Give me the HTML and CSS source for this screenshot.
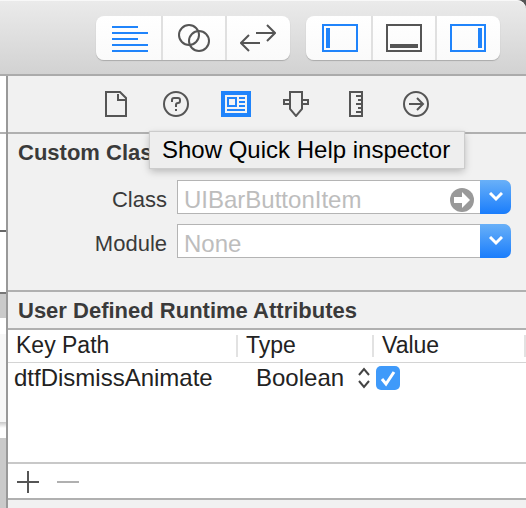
FILE: index.html
```html
<!DOCTYPE html>
<html lang="en">
<head>
<meta charset="utf-8">
<title>Identity Inspector</title>
<link rel="stylesheet" href="styles.css">
</head>
<body>
<header class="toolbar">
  <div class="segments" role="group" aria-label="Editor">
    <button class="segment active" type="button" aria-label="Standard editor"><svg width="36" height="28" fill="none" stroke="currentColor" stroke-width="2"><path d="M0 3H26M0 9H36M0 15H26M0 21H36M0 27H36"/></svg></button>
    <button class="segment" type="button" aria-label="Assistant editor"><svg width="36" height="28" fill="none" stroke="currentColor" stroke-width="2"><circle cx="13" cy="11" r="10"/><circle cx="23" cy="17" r="10"/></svg></button>
    <button class="segment" type="button" aria-label="Version editor"><svg width="36" height="28" fill="none" stroke="currentColor" stroke-width="2"><path d="M16 9H35M27 1l8 8-8 8M20 19H1M9 11l-8 8 8 8"/></svg></button>
  </div>
  <div class="segments" role="group" aria-label="View">
    <button class="segment active" type="button" aria-label="Navigator"><svg width="36" height="28" fill="none" stroke="currentColor" stroke-width="2"><rect x="1" y="1" width="34" height="26"/><path stroke-width="4" d="M6 4v20"/></svg></button>
    <button class="segment" type="button" aria-label="Debug area"><svg width="36" height="28" fill="none" stroke="currentColor" stroke-width="2"><rect x="1" y="1" width="34" height="26"/><path stroke-width="4" d="M4 22h28"/></svg></button>
    <button class="segment active" type="button" aria-label="Utilities"><svg width="36" height="28" fill="none" stroke="currentColor" stroke-width="2"><rect x="1" y="1" width="34" height="26"/><path stroke-width="4" d="M30 4v20"/></svg></button>
  </div>
</header>
<div class="workspace">
  <div class="canvas-edge" aria-hidden="true">
    <div class="edge-bar"></div>
    <div class="edge-view"></div>
    <div class="edge-cell"></div>
    <div class="edge-gap"></div>
    <div class="edge-space"></div>
    <div class="edge-scene"></div>
    <div class="edge-foot"></div>
    <div class="edge-rest"></div>
  </div>
  <main class="inspector">
    <nav class="tabs">
      <button class="tab" type="button" aria-label="File"><svg width="30" height="26" fill="none" stroke="currentColor" stroke-width="2"><path d="M5 1h14l6 6v18H5zM17 3v6h7"/></svg></button>
      <button class="tab" type="button" aria-label="Quick Help"><svg width="30" height="26" fill="none" stroke="currentColor" stroke-width="2"><circle cx="15" cy="13" r="12"/><path d="M11 11V9q0-2 2-2h4q2 0 2 2v1q0 2-2 2t-2 2v2M15 18v2"/></svg></button>
      <button class="tab active" type="button" aria-label="Identity"><svg width="30" height="26" fill="none" stroke="currentColor" stroke-width="2"><path fill="currentColor" stroke="none" d="M0 0h30v26H0z"/><path fill="#f4f4f4" stroke="none" d="M4 4h22v18H4z"/><path d="M7 7h8v8H7zM18 7h6M18 11h6M18 15h6M6 19h18"/></svg></button>
      <button class="tab" type="button" aria-label="Attributes"><svg width="30" height="26" fill="none" stroke="currentColor" stroke-width="2"><path d="M9 1h12v17l-6 7-6-7zM9 9H3v4h6M21 9h6v4h-6"/></svg></button>
      <button class="tab" type="button" aria-label="Size"><svg width="30" height="26" fill="none" stroke="currentColor" stroke-width="2"><path d="M9 1h12v24H9zM15 5h6M17 9h4M15 13h6M17 17h4M15 21h6"/></svg></button>
      <button class="tab" type="button" aria-label="Connections"><svg width="30" height="26" fill="none" stroke="currentColor" stroke-width="2"><circle cx="15" cy="13" r="12"/><path d="M8 13h14M16 7l6 6-6 6"/></svg></button>
      <div class="tooltip" role="tooltip">Show Quick Help inspector</div>
    </nav>
    <section class="custom-class">
      <h2>Custom Class</h2>
      <div class="field">
        <label for="class">Class</label>
        <div class="combo">
          <input id="class" type="text" placeholder="UIBarButtonItem">
          <button class="jump" type="button" aria-label="Go to class"><svg width="24" height="24"><circle cx="12" cy="12" r="12" fill="#999"/><path fill="#fff" d="M4 9h8V4l8 8-8 8v-5H4z"/></svg></button>
          <button class="drop" type="button" aria-label="Choose class"><svg width="14" height="10" fill="none" stroke="#fff" stroke-width="3"><path d="M1 1l6 6 6-6"/></svg></button>
        </div>
      </div>
      <div class="field">
        <label for="module">Module</label>
        <div class="combo">
          <input id="module" type="text" placeholder="None">
          <button class="drop" type="button" aria-label="Choose module"><svg width="14" height="10" fill="none" stroke="#fff" stroke-width="3"><path d="M1 1l6 6 6-6"/></svg></button>
        </div>
      </div>
    </section>
    <section class="attributes">
      <h2>User Defined Runtime Attributes</h2>
      <div class="listing">
        <table>
          <colgroup><col class="key-col"><col class="type-col"><col><col class="end-col"></colgroup>
          <thead><tr><th><span>Key Path</span></th><th><span>Type</span></th><th><span>Value</span></th><td><span></span></td></tr></thead>
          <tbody><tr>
            <td>dtfDismissAnimate</td>
            <td><div class="type"><select aria-label="Type"><option>Boolean</option></select><svg width="14" height="22" fill="none" stroke="#444" stroke-width="2"><path d="M2 8l5-6 5 6M2 14l5 6 5-6"/></svg></div></td>
            <td><label class="check"><input type="checkbox" checked aria-label="Value"><svg width="24" height="24" fill="none" stroke="#fff" stroke-width="3"><path d="M6 13l4 5 8-12"/></svg></label></td>
            <td></td>
          </tr></tbody>
        </table>
      </div>
      <div class="actions">
        <button type="button" aria-label="Add"><svg width="22" height="22" stroke="#555" stroke-width="2"><path d="M0 11h22M11 0v22"/></svg></button>
        <button type="button" aria-label="Remove" disabled><svg width="22" height="22" stroke="#b0b0b0" stroke-width="2"><path d="M0 11h22"/></svg></button>
      </div>
    </section>
  </main>
</div>
</body>
</html>
```
FILE: styles.css
```css
* { box-sizing: border-box; }

body {
  margin: 0;
  min-height: 100vh;
  display: flex;
  flex-direction: column;
  background: #555;
  color: #222;
  font: 22px/28px "Liberation Sans", Arial, sans-serif;
}

svg { display: block; }

button {
  padding: 0;
  border: 0;
  background: none;
  color: #555;
  font: inherit;
}

.toolbar {
  display: flex;
  justify-content: flex-end;
  gap: 16px;
  padding: 16px 26px 14px 8px;
  border-bottom: 2px solid #ababab;
  border-top-right-radius: 9px;
  background: linear-gradient(#ebebeb, #d2d2d2);
  box-shadow: inset 0 1px #f8f8f8;
}

.segments {
  display: flex;
  height: 44px;
  border-radius: 8px;
  background: linear-gradient(#fff, #fafafa);
  box-shadow: 0 1px 1px #aaa;
}

.segment {
  display: flex;
  align-items: center;
  justify-content: center;
  width: 65px;
}

.segment:first-child { padding-left: 3px; }
.segment:last-child { padding-right: 1px; }
.segment + .segment { border-left: 2px solid #e0e0e0; }
.segment:nth-child(2) { width: 64px; }
.active { color: #2084fb; }

.workspace {
  flex: 1;
  display: flex;
  background: #f1f1f1;
}

.canvas-edge {
  width: 8px;
  display: flex;
  flex-direction: column;
  border-right: 2px solid #999;
  background: #fff;
}

.edge-bar { height: 58px; border-bottom: 2px solid #b0b0b0; }
.edge-view { height: 98px; border-bottom: 2px solid #666; }
.edge-cell { height: 62px; border-bottom: 2px solid #777; }
.edge-gap { height: 24px; background: #cacaca; }
.edge-space { height: 16px; }
.edge-scene { height: 88px; background: #f7f7f7; }
.edge-foot { height: 16px; background: linear-gradient(#c8c8c8, #fff 6px); }
.edge-rest { flex: 1; background: #cacaca; }

.inspector {
  flex: 1;
  min-width: 0;
  display: flex;
  flex-direction: column;
}

.tabs {
  position: relative;
  display: flex;
  justify-content: center;
  height: 58px;
  padding-right: 2px;
  border-bottom: 2px solid #b0b0b0;
}

.tab {
  display: flex;
  align-items: center;
  justify-content: center;
  width: 60px;
}

.tab.active { color: #2084fb; }

.tooltip {
  position: absolute;
  top: 56px;
  left: 142px;
  padding: 4px 14px 4px 12px;
  background: #eee;
  box-shadow: 0 0 1px 1px #ccc, 0 3px 8px #0004;
  color: #000;
  font-size: 24px;
  white-space: nowrap;
}

h2 {
  margin: 0;
  padding: 5px 10px 3px;
  color: #3a3a3a;
  font-size: 22px;
  line-height: 28px;
}

.custom-class { padding-bottom: 32px; }

.field {
  display: flex;
  align-items: center;
  gap: 10px;
  padding-right: 15px;
  margin-top: 10px;
  color: #3a3a3a;
}

.field > label {
  width: 159px;
  padding-top: 6px;
  text-align: right;
}

.combo {
  flex: 1;
  min-width: 0;
  display: flex;
  align-items: center;
  height: 34px;
  border: 1px solid #b4b4b4;
  border-right: 0;
  border-radius: 0 8px 8px 0;
  background: #fff;
}

.combo input {
  flex: 1;
  min-width: 0;
  padding: 6px 6px 0;
  border: 0;
  background: none;
  font: inherit;
  font-size: 24px;
}

.combo input::placeholder { color: #bdbdbd; }
.jump { margin: 6px 6px 0 0; }

.drop {
  display: flex;
  align-items: center;
  justify-content: center;
  width: 31px;
  height: 34px;
  border-radius: 0 7px 7px 0;
  background: linear-gradient(#69b0f8, #1a7dfc);
}

.attributes {
  flex: 1;
  display: flex;
  flex-direction: column;
  border-top: 2px solid #b0b0b0;
  border-bottom: 2px solid #b0b0b0;
  margin-bottom: 8px;
}

.listing {
  flex: 1;
  border-top: 2px solid #b0b0b0;
  background: #fff;
}

table {
  width: 100%;
  table-layout: fixed;
  border-collapse: collapse;
}

.key-col { width: 228px; }
.type-col { width: 136px; }
.end-col { width: 2px; }

th, td {
  padding: 0;
  text-align: left;
  font-weight: normal;
}

thead { font-size: 23px; }
thead tr { height: 32px; border-bottom: 1px solid #d4d4d4; }
thead span { display: block; height: 22px; padding-left: 8px; line-height: 20px; }
thead th + th span, thead td span { border-left: 2px solid #e2e2e2; }
thead td span { width: 2px; padding: 0; }
tbody { font-size: 24px; }
tbody tr { height: 32px; }
tbody td:first-child { padding-left: 6px; }
.type { display: flex; align-items: center; padding-left: 20px; }

.type select {
  flex: 1;
  padding: 0;
  border: 0;
  appearance: none;
  background: none;
  color: inherit;
  font: inherit;
}

.type svg { margin-right: 1px; }

.check {
  display: grid;
  width: 24px;
  height: 24px;
  margin-left: 4px;
}

.check > * { grid-area: 1 / 1; }

.check input {
  width: 24px;
  height: 24px;
  margin: 0;
  appearance: none;
  border-radius: 5px;
  background: #3f9afa;
}

.actions {
  display: flex;
  align-items: center;
  gap: 18px;
  height: 36px;
  padding: 2px 9px 0;
  border-top: 2px solid #c8c8c8;
  background: #fff;
}
```
